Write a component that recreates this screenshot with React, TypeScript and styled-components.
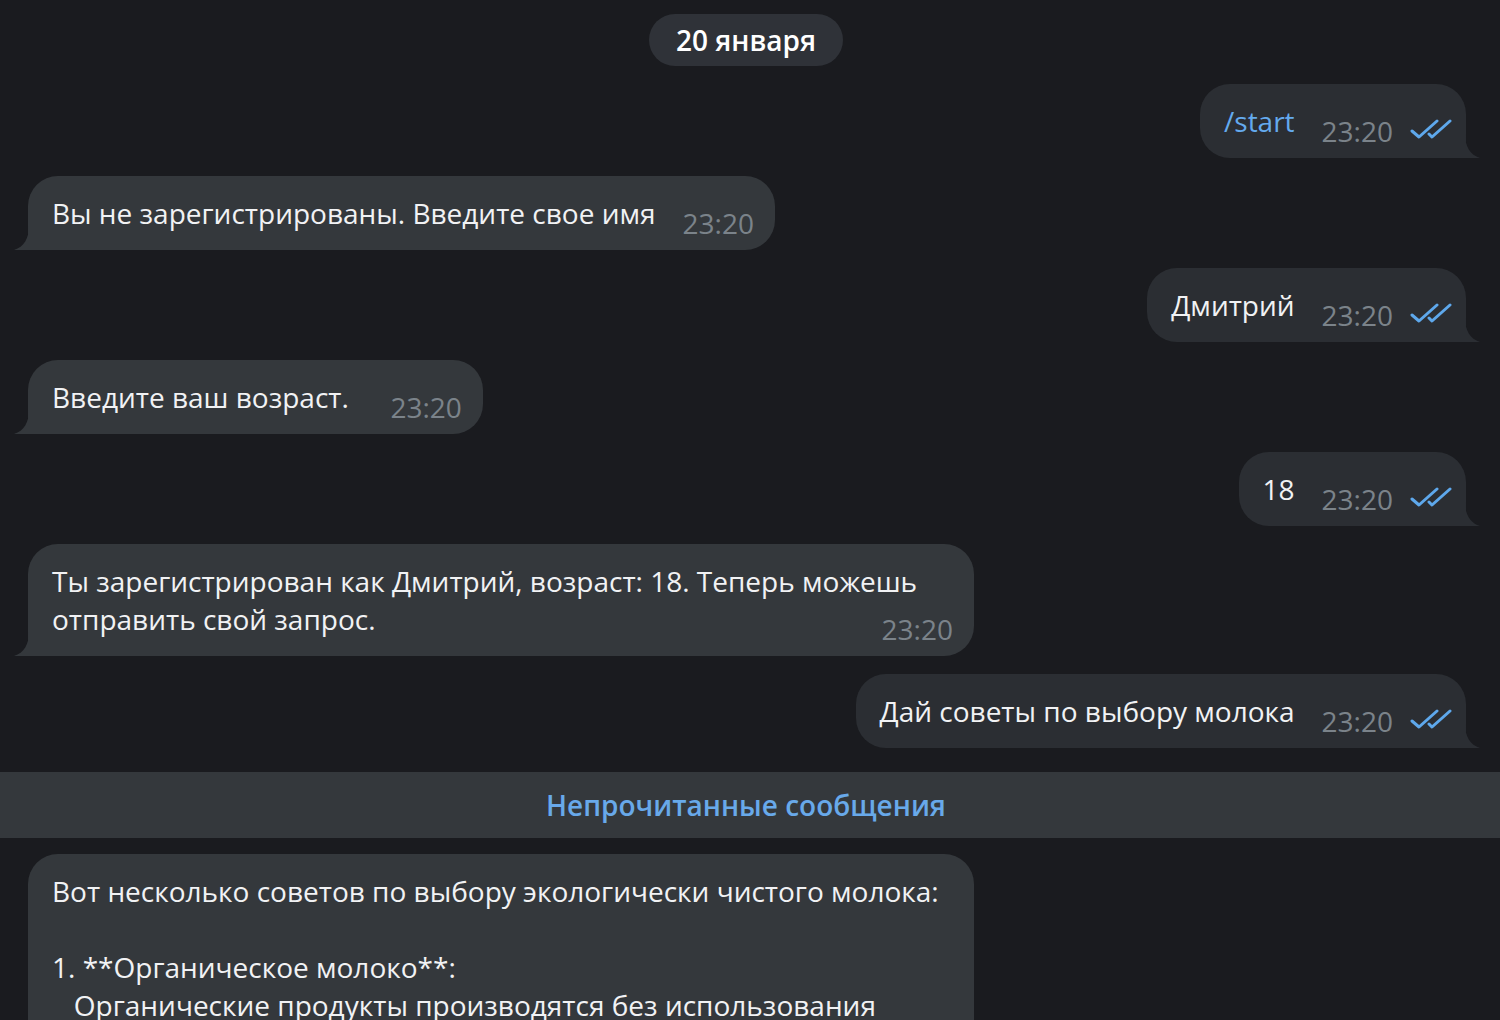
import React from 'react';
import styled, { createGlobalStyle } from 'styled-components';

const Global = createGlobalStyle`
  html, body {
    margin: 0;
    padding: 0;
    background: #1a1b1f;
    height: 1020px;
    overflow: hidden;
  }
  body {
    font-family: "Open Sans", "Noto Sans", sans-serif;
    -webkit-font-smoothing: antialiased;
  }
`;

const Page = styled.div`
  display: flex;
  flex-direction: column;
  padding-top: 14px;
`;

const Section = styled.div`
  display: flex;
  flex-direction: column;
  gap: 18px;
  padding: 0 34px 0 28px;
`;

const DateRow = styled.div`
  display: flex;
  justify-content: center;
  padding-right: 2px;
`;

const DatePill = styled.div`
  height: 52px;
  padding: 0 27px;
  border-radius: 26px;
  background: #2f3238;
  color: #ffffff;
  font-size: 28px;
  font-weight: 600;
  line-height: 52px;
`;

const Bubble = styled.div<{ $out?: boolean }>`
  position: relative;
  align-self: ${(p) => (p.$out ? 'flex-end' : 'flex-start')};
  box-sizing: border-box;
  max-width: 946px;
  display: flow-root;
  padding: 18px ${(p) => (p.$out ? 14 : 21)}px 8px 24px;
  background: ${(p) => (p.$out ? '#2b2e33' : '#34383c')};
  border-radius: ${(p) => (p.$out ? '30px 30px 0 30px' : '30px 30px 30px 0')};
  color: #f1f2f4;
  font-size: 28px;
  line-height: 38px;
  white-space: pre-wrap;
`;

const Tail = styled.svg<{ $out?: boolean }>`
  position: absolute;
  bottom: 0;
  ${(p) => (p.$out ? 'right: -14px;' : 'left: -14px;')}
  width: 15px;
  height: 24px;
  fill: ${(p) => (p.$out ? '#2b2e33' : '#34383c')};
`;

const Meta = styled.span`
  float: right;
  display: flex;
  align-items: center;
  gap: 17px;
  margin: 10px 0 0 27px;
  color: #7b838a;
  font-size: 28px;
  line-height: 38px;
  white-space: nowrap;
`;

const Checks = styled.svg`
  width: 42px;
  height: 22px;
  margin-top: -4px;
  stroke: #5ea8ec;
  stroke-width: 3;
  stroke-linecap: round;
  stroke-linejoin: round;
  fill: none;
`;

const Command = styled.span`
  color: #64aaee;
`;

const UnreadBar = styled.div`
  margin: 24px 0 16px;
  height: 66px;
  padding-right: 8px;
  display: flex;
  align-items: center;
  justify-content: center;
  background: #34383c;
  color: #68a9ea;
  font-size: 28px;
  font-weight: 600;
`;

const TailShape = ({ out }: { out?: boolean }) => (
  <Tail $out={out} viewBox="0 0 15 24">
    {out ? <path d="M0,0 C0,12 5,21 15,24 L0,24 Z" /> : <path d="M15,0 C15,12 10,21 0,24 L15,24 Z" />}
  </Tail>
);

const Message = ({ out, time, children }: { out?: boolean; time: string; children: React.ReactNode }) => (
  <Bubble $out={out}>
    {children}
    <Meta>
      {time}
      {out && (
        <Checks viewBox="0 0 42 22">
          <path d="M2,13 L9,19 L27,3" />
          <path d="M19,16 L22,19 L40,3" />
        </Checks>
      )}
    </Meta>
    <TailShape out={out} />
  </Bubble>
);

const longText =
  'Вот несколько советов по выбору экологически чистого молока:\n\n1. **Органическое молоко**:\n   Органические продукты производятся без использования синтетических пестицидов, удобрений и гормонов роста.\n\n2. **Местные производители**:\n   Выбирайте молоко от местных ферм.';

export default function App() {
  return (
    <>
      <Global />
      <Page>
        <Section>
          <DateRow>
            <DatePill>20 января</DatePill>
          </DateRow>
          <Message out time="23:20">
            <Command>/start</Command>
          </Message>
          <Message time="23:20">Вы не зарегистрированы. Введите свое имя</Message>
          <Message out time="23:20">Дмитрий</Message>
          <Message time="23:20">{'Введите ваш возраст.\u00a0\u00a0'}</Message>
          <Message out time="23:20">18</Message>
          <Message time="23:20">Ты зарегистрирован как Дмитрий, возраст: 18. Теперь можешь отправить свой запрос.</Message>
          <Message out time="23:20">Дай советы по выбору молока</Message>
        </Section>
        <UnreadBar>Непрочитанные сообщения</UnreadBar>
        <Section>
          <Message time="23:21">{longText}</Message>
        </Section>
      </Page>
    </>
  );
}
